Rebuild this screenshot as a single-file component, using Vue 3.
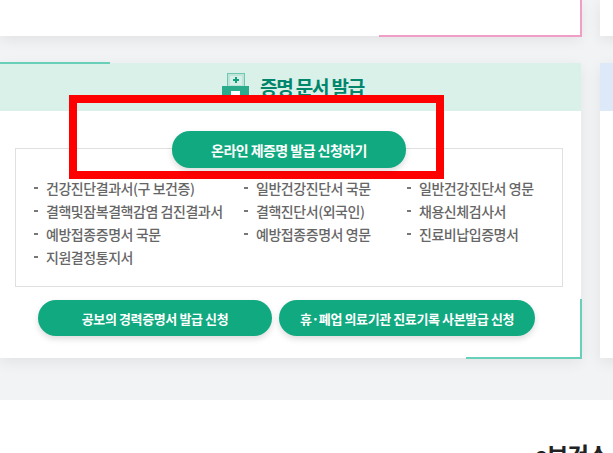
<script setup>
const items = [
  ['건강진단결과서(구 보건증)', '일반건강진단서 국문', '일반건강진단서 영문'],
  ['결핵및잠복결핵감염 검진결과서', '결핵진단서(외국인)', '채용신체검사서'],
  ['예방접종증명서 국문', '예방접종증명서 영문', '진료비납입증명서'],
  ['지원결정통지서']
]
</script>

<template>
  <div class="page">
    <section class="band">
      <div class="row top-row">
        <div class="card top-card"><i class="corner pink"></i></div>
        <div class="card side"></div>
      </div>
      <div class="row main-row">
        <div class="card main-card">
          <i class="teal-top"></i>
          <i class="corner teal"></i>
          <header class="head">
            <svg class="icon" viewBox="0 0 27 26" width="27" height="26">
              <rect x="5.5" y="1.5" width="17" height="16" fill="#bfe5da" stroke="#6fc7b0" />
              <rect x="8" y="4" width="12" height="9" fill="#d6efe8" />
              <path d="M14 5v6M11 8h6" stroke="#12a07e" stroke-width="2" fill="none" />
              <path d="M9 15h10" stroke="#8bd0bd" stroke-width="1.5" fill="none" />
              <path d="M0 14h27v12H0z" fill="#2aab8c" />
              <rect x="9" y="19" width="9" height="7" fill="#fff" />
            </svg>
            <h2>증명 문서 발급</h2>
          </header>
          <div class="body">
            <a class="btn online">온라인 제증명 발급 신청하기</a>
            <div class="box">
              <ul v-for="(r, i) in items" :key="i" class="line">
                <li v-for="t in r" :key="t">{{ t }}</li>
              </ul>
            </div>
            <div class="actions">
              <a class="btn public">공보의 경력증명서 발급 신청</a>
              <a class="btn copy">휴·폐업 의료기관 진료기록 사본발급 신청</a>
            </div>
          </div>
        </div>
        <div class="card side"><div class="side-head"></div></div>
      </div>
    </section>
    <section class="next"><h3>e보건소</h3></section>
    <div class="mark"></div>
  </div>
</template>

<style>
html, body { margin: 0; overflow: hidden; background: #fff; }
</style>

<style scoped>
.page {
  position: relative;
  width: 613px;
  height: 453px;
  overflow: hidden;
  font-family: "Noto Sans CJK KR", "Noto Sans", sans-serif;
}
.band {
  height: 400px;
  background: #f2f3f5;
  box-sizing: border-box;
}
.row { display: flex; gap: 19px; width: 900px; }
.top-row { height: 36px; }
.main-row { margin-top: 27px; height: 295px; }
.card {
  position: relative;
  background: #fff;
  box-shadow: 0 4px 14px rgba(0, 0, 0, 0.07);
}
.top-card, .main-card { width: 581px; flex: none; }
.side { width: 280px; flex: none; }
.side-head { height: 48px; background: #dde8f9; }
.corner {
  position: absolute;
  right: 0;
  bottom: 0;
  border-right: 2px solid;
  border-bottom: 2px solid;
  margin: 0 -1px -1px 0;
}
.pink { width: 201px; height: 60px; border-color: #ef9fc6; }
.teal { width: 114px; height: 58px; border-color: #68d0b8; }
.teal-top {
  position: absolute;
  top: -1px;
  left: 0;
  width: 110px;
  height: 2px;
  background: #68d0b8;
}
.head {
  height: 48px;
  background: #daf1ea;
  display: flex;
  justify-content: center;
  align-items: flex-start;
  gap: 11px;
  padding-top: 9px;
  box-sizing: border-box;
  padding-left: 5px;
}
.icon { flex: none; }
.head h2 {
  margin: 1px 0 0;
  font-size: 19px;
  line-height: 28px;
  font-weight: 700;
  letter-spacing: -1.2px;
  color: #00866a;
}
.body {
  padding: 20px 18px 0 15px;
  display: flex;
  flex-direction: column;
  align-items: center;
}
.btn {
  display: flex;
  align-items: center;
  justify-content: center;
  background: #10a980;
  color: #fff;
  height: 36px;
  border-radius: 18px;
  font-size: 13px;
  font-weight: 700;
  letter-spacing: -0.4px;
  box-shadow: 0 3px 6px rgba(0, 0, 0, 0.14);
  white-space: nowrap;
}
.online {
  width: 234px;
  height: 37px;
  position: relative;
  z-index: 1;
  font-size: 14px;
  letter-spacing: -0.55px;
}
.box {
  align-self: stretch;
  margin-top: -20px;
  height: 139px;
  box-sizing: border-box;
  border: 1px solid #e0e0e0;
  padding-top: 28px;
}
.line {
  display: grid;
  grid-template-columns: 210px 163px 1fr;
  margin: 0 0 0 18px;
  padding: 0;
  list-style: none;
  height: 23px;
}
.line li {
  position: relative;
  padding-left: 12px;
  font-size: 14px;
  line-height: 22px;
  font-weight: 500;
  letter-spacing: -0.45px;
  color: #666;
  white-space: nowrap;
}
.line li::before {
  content: "";
  position: absolute;
  left: 0;
  top: 10px;
  width: 4px;
  height: 1.5px;
  background: #777;
}
.actions {
  align-self: flex-start;
  display: flex;
  gap: 7px;
  margin: 13px 0 0 23px;
}
.public { width: 234px; }
.copy { width: 256px; }
.next {
  display: flex;
  justify-content: flex-start;
  padding: 37px 0 0 534px;
  white-space: nowrap;
}
.next h3 {
  margin: 0;
  font-size: 24px;
  line-height: 36px;
  font-weight: 700;
  letter-spacing: -1.5px;
  color: #222;
}
.mark {
  position: absolute;
  left: 69px;
  top: 95px;
  width: 375px;
  height: 84px;
  box-sizing: border-box;
  border: 8px solid #ff0000;
}
</style>
